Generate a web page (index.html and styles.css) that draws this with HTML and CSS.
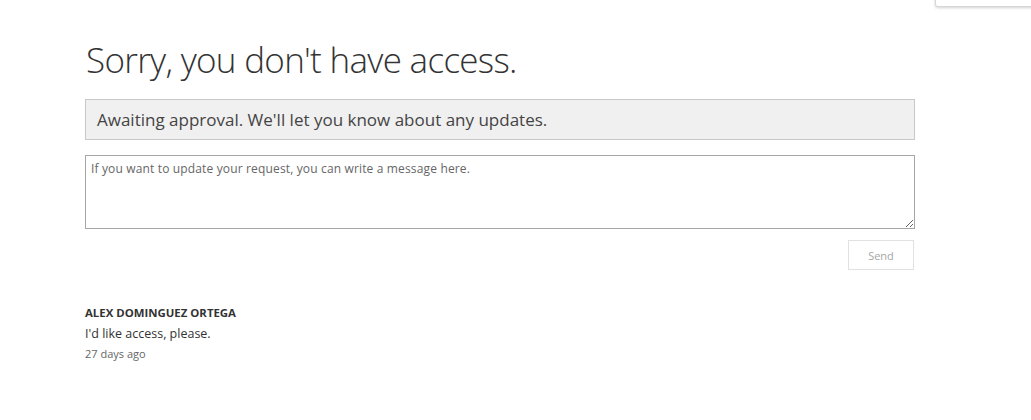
FILE: index.html
```html
<!DOCTYPE html>
<html>
<head>
<meta charset="utf-8">
<link rel="stylesheet" href="styles.css">
</head>
<body>
<div class="corner-card"></div>
<main class="page">
  <h1 class="title">Sorry, you don't have access.</h1>
  <div class="status">Awaiting approval. We'll let you know about any updates.</div>
  <textarea class="message" placeholder="If you want to update your request, you can write a message here."></textarea>
  <div class="actions"><button class="send">Send</button></div>
  <section class="comment">
    <div class="author">ALEX DOMINGUEZ ORTEGA</div>
    <div class="text">I'd like access, please.</div>
    <div class="time">27 days ago</div>
  </section>
</main>
</body>
</html>
```
FILE: styles.css
```css
html, body { margin: 0; padding: 0; background: #fff; }
body { font-family: "Open Sans", "Noto Sans", sans-serif; color: #333; overflow: hidden; height: 420px; position: relative; }
.corner-card {
  position: absolute; top: -10px; left: 935px; width: 110px; height: 15px;
  background: #fff; border: 1px solid #d6d6d6; border-radius: 3px;
  box-shadow: 0 1px 3px rgba(0,0,0,0.18);
}
.page { width: 830px; margin-left: 85px; padding-top: 37px; display: flex; flex-direction: column; }
.title { margin: 0; font-weight: 300; font-size: 35px; line-height: 46px; color: #333; letter-spacing: -0.7px; padding-left: 1px; }
.status {
  margin-top: 16px; height: 39px; box-sizing: content-box; border: 1px solid #c8c8c8; background: #f0f0f0;
  font-size: 17px; line-height: 39px; padding: 0 11px; color: #444; letter-spacing: 0;
}
.message {
  margin: 15px 0 0; height: 74px; box-sizing: border-box; width: 830px; border: 1px solid #a6a6a6;
  font-family: inherit; font-size: 12px; padding: 4px 5px; resize: vertical; color: #333; letter-spacing: 0.15px;
}
.message::placeholder { color: #666; }
.actions { display: flex; justify-content: flex-end; margin-top: 11px; }
.send {
  width: 66px; height: 30px; margin-right: 1px; background: #fff; border: 1px solid #e1e1e1;
  font-family: inherit; font-size: 11px; color: #a6a6a6; padding: 0;
}
.comment { margin-top: 35px; display: flex; flex-direction: column; }
.author { font-size: 11.4px; font-weight: 700; color: #333; line-height: 16px; }
.text { font-size: 12.5px; color: #333; line-height: 18px; margin-top: 4px; }
.time { font-size: 11px; color: #666; line-height: 16px; margin-top: 3px; }
```
